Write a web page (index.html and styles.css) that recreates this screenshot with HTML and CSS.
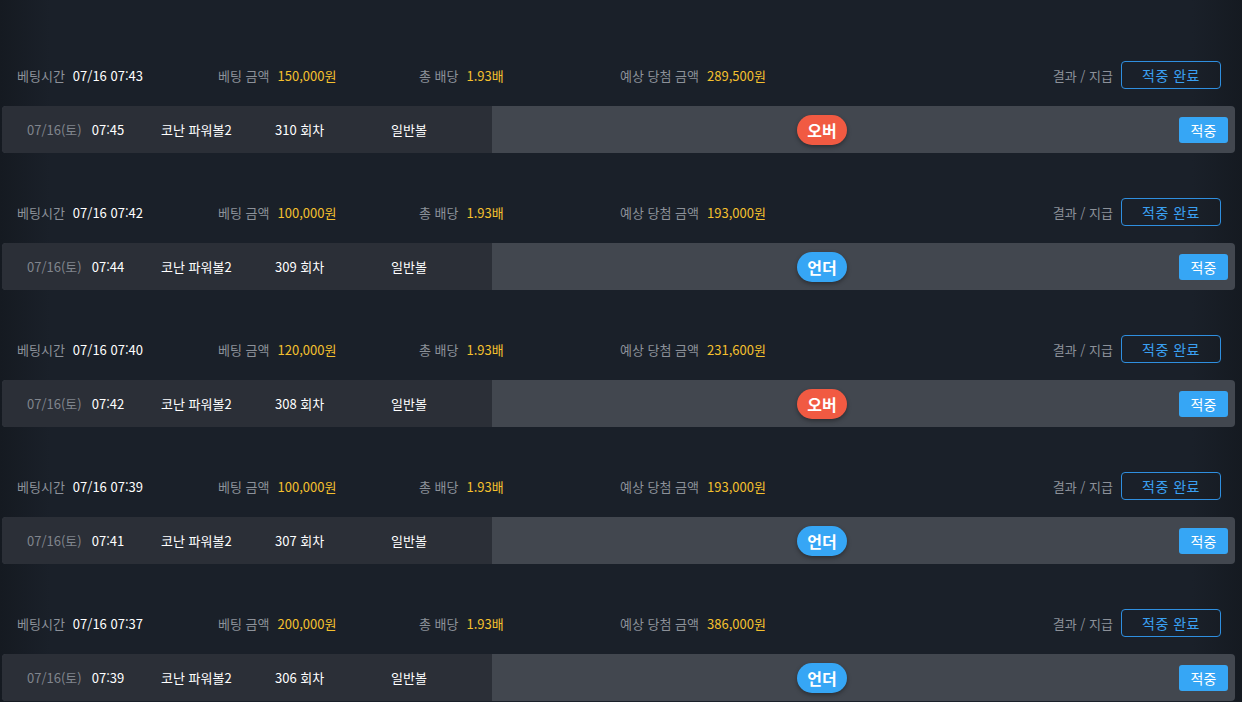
FILE: index.html
```html
<!DOCTYPE html>
<html lang="ko">
<head>
<meta charset="utf-8">
<link rel="stylesheet" href="styles.css">
</head>
<body>
<div class="list">
  <div class="item">
    <div class="head">
      <div class="col"><span class="lbl">베팅시간</span><span class="val">07/16 07:43</span></div>
      <div class="col"><span class="lbl">베팅 금액</span><span class="amt">150,000원</span></div>
      <div class="col"><span class="lbl">총 배당</span><span class="amt">1.93배</span></div>
      <div class="col"><span class="lbl">예상 당첨 금액</span><span class="amt">289,500원</span></div>
      <div class="result"><span class="lbl">결과 / 지급</span><span class="outline-btn">적중 완료</span></div>
    </div>
    <div class="bar">
      <div class="left">
        <div class="c-date"><span class="date">07/16(토)</span><span class="time">07:45</span></div>
        <div class="c-game">코난 파워볼2</div>
        <div class="c-round">310 회차</div>
        <div class="c-type">일반볼</div>
      </div>
      <div class="right">
        <div class="pick"><span class="badge over">오버</span></div>
        <div class="status"><span class="hit">적중</span></div>
      </div>
    </div>
  </div>
  <div class="item">
    <div class="head">
      <div class="col"><span class="lbl">베팅시간</span><span class="val">07/16 07:42</span></div>
      <div class="col"><span class="lbl">베팅 금액</span><span class="amt">100,000원</span></div>
      <div class="col"><span class="lbl">총 배당</span><span class="amt">1.93배</span></div>
      <div class="col"><span class="lbl">예상 당첨 금액</span><span class="amt">193,000원</span></div>
      <div class="result"><span class="lbl">결과 / 지급</span><span class="outline-btn">적중 완료</span></div>
    </div>
    <div class="bar">
      <div class="left">
        <div class="c-date"><span class="date">07/16(토)</span><span class="time">07:44</span></div>
        <div class="c-game">코난 파워볼2</div>
        <div class="c-round">309 회차</div>
        <div class="c-type">일반볼</div>
      </div>
      <div class="right">
        <div class="pick"><span class="badge under">언더</span></div>
        <div class="status"><span class="hit">적중</span></div>
      </div>
    </div>
  </div>
  <div class="item">
    <div class="head">
      <div class="col"><span class="lbl">베팅시간</span><span class="val">07/16 07:40</span></div>
      <div class="col"><span class="lbl">베팅 금액</span><span class="amt">120,000원</span></div>
      <div class="col"><span class="lbl">총 배당</span><span class="amt">1.93배</span></div>
      <div class="col"><span class="lbl">예상 당첨 금액</span><span class="amt">231,600원</span></div>
      <div class="result"><span class="lbl">결과 / 지급</span><span class="outline-btn">적중 완료</span></div>
    </div>
    <div class="bar">
      <div class="left">
        <div class="c-date"><span class="date">07/16(토)</span><span class="time">07:42</span></div>
        <div class="c-game">코난 파워볼2</div>
        <div class="c-round">308 회차</div>
        <div class="c-type">일반볼</div>
      </div>
      <div class="right">
        <div class="pick"><span class="badge over">오버</span></div>
        <div class="status"><span class="hit">적중</span></div>
      </div>
    </div>
  </div>
  <div class="item">
    <div class="head">
      <div class="col"><span class="lbl">베팅시간</span><span class="val">07/16 07:39</span></div>
      <div class="col"><span class="lbl">베팅 금액</span><span class="amt">100,000원</span></div>
      <div class="col"><span class="lbl">총 배당</span><span class="amt">1.93배</span></div>
      <div class="col"><span class="lbl">예상 당첨 금액</span><span class="amt">193,000원</span></div>
      <div class="result"><span class="lbl">결과 / 지급</span><span class="outline-btn">적중 완료</span></div>
    </div>
    <div class="bar">
      <div class="left">
        <div class="c-date"><span class="date">07/16(토)</span><span class="time">07:41</span></div>
        <div class="c-game">코난 파워볼2</div>
        <div class="c-round">307 회차</div>
        <div class="c-type">일반볼</div>
      </div>
      <div class="right">
        <div class="pick"><span class="badge under">언더</span></div>
        <div class="status"><span class="hit">적중</span></div>
      </div>
    </div>
  </div>
  <div class="item">
    <div class="head">
      <div class="col"><span class="lbl">베팅시간</span><span class="val">07/16 07:37</span></div>
      <div class="col"><span class="lbl">베팅 금액</span><span class="amt">200,000원</span></div>
      <div class="col"><span class="lbl">총 배당</span><span class="amt">1.93배</span></div>
      <div class="col"><span class="lbl">예상 당첨 금액</span><span class="amt">386,000원</span></div>
      <div class="result"><span class="lbl">결과 / 지급</span><span class="outline-btn">적중 완료</span></div>
    </div>
    <div class="bar">
      <div class="left">
        <div class="c-date"><span class="date">07/16(토)</span><span class="time">07:39</span></div>
        <div class="c-game">코난 파워볼2</div>
        <div class="c-round">306 회차</div>
        <div class="c-type">일반볼</div>
      </div>
      <div class="right">
        <div class="pick"><span class="badge under">언더</span></div>
        <div class="status"><span class="hit">적중</span></div>
      </div>
    </div>
  </div>
</div>
</body>
</html>
```
FILE: styles.css
```css
* { box-sizing: border-box; }
html, body { margin: 0; padding: 0; }
body {
  width: 1242px;
  height: 702px;
  overflow: hidden;
  background: linear-gradient(90deg, #151a21 0%, #1a2029 4%, #1a2029 96%, #151a21 100%);
  font-family: "Noto Sans CJK KR", "Noto Sans", sans-serif;
  font-size: 13px;
  color: #ffffff;
}
.list {
  padding: 61px 7px 0 2px;
  display: flex;
  flex-direction: column;
  gap: 45px;
}
.item {
  display: flex;
  flex-direction: column;
  gap: 17px;
}
.head {
  height: 28px;
  display: flex;
  align-items: center;
  padding-left: 15px;
  padding-right: 14px;
}
.col {
  width: 201px;
  display: flex;
  align-items: center;
  gap: 8px;
  white-space: nowrap;
}
.lbl { color: #8c9199; }
.val { color: #ffffff; }
.amt { color: #f5c02e; }
.result {
  margin-left: auto;
  display: flex;
  align-items: center;
  gap: 8px;
}
.outline-btn {
  width: 100px;
  height: 28px;
  border: 1px solid #2f8fdf;
  border-radius: 4px;
  color: #3aa0f2;
  font-size: 14px;
  display: flex;
  align-items: center;
  justify-content: center;
  letter-spacing: 0.5px;
}
.bar {
  height: 47px;
  border-radius: 4px;
  overflow: hidden;
  display: flex;
  background: #42474f;
}
.left {
  width: 490px;
  background: #2b2f37;
  display: flex;
  align-items: center;
  padding-left: 25px;
  white-space: nowrap;
}
.c-date { width: 134px; display: flex; gap: 10px; }
.date { color: #80858d; }
.c-game { width: 114px; }
.c-round { width: 116px; }
.right {
  flex: 1;
  display: flex;
  align-items: center;
}
.pick {
  flex: 1;
  display: flex;
  justify-content: center;
}
.badge {
  width: 50px;
  height: 30px;
  border-radius: 15px;
  display: flex;
  align-items: center;
  justify-content: center;
  font-size: 16px;
  font-weight: 700;
  color: #fff;
  box-shadow: 0 2px 4px rgba(0,0,0,0.35);
}
.over { background: #f15a42; }
.under { background: #36a6f5; }
.status {
  width: 83px;
  display: flex;
  justify-content: flex-end;
  padding-right: 7px;
}
.hit {
  width: 49px;
  height: 26px;
  border-radius: 3px;
  background: #36a6f5;
  color: #fff;
  font-size: 14px;
  display: flex;
  align-items: center;
  justify-content: center;
}
```
